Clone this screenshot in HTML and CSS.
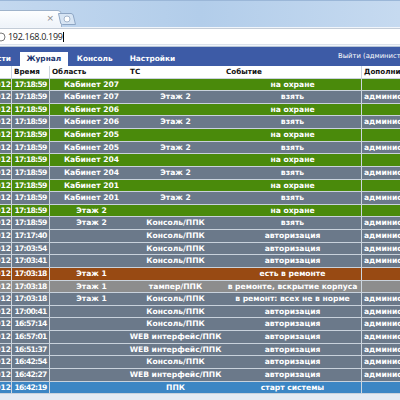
FILE: index.html
```html
<!DOCTYPE html>
<html>
<head>
  <title>Журнал</title>
  <meta charset="utf-8">
  <link rel="stylesheet" href="styles.css">
</head>
<body>
  <div class="tabstrip">
    <div class="tab"><span class="tab-close">&times;</span></div>
    <svg class="newtab" width="18" height="12" viewBox="0 0 18 12">
      <path d="M0.5 0.5 H13 Q14.5 0.5 15.2 2 L17.5 11.5 H4.5 Q3 11.5 2.6 10 Z" fill="#d7e5f4" stroke="#8ea6c4"/>
      <circle cx="9" cy="6" r="3" fill="#fff" stroke="#a4b6cc"/>
    </svg>
  </div>
  <div class="toolbar">
    <div class="omnibox">
      <svg class="globe" width="8" height="10" viewBox="0 0 8 10">
        <circle cx="1" cy="5" r="4" fill="none" stroke="#777" stroke-width="1"/>
      </svg>
      <span class="url">192.168.0.199</span><span class="caret"></span>
    </div>
  </div>
  <div class="nav">
    <span class="nav-item cut">сти</span>
    <span class="nav-item active">Журнал</span>
    <span class="nav-item">Консоль</span>
    <span class="nav-item">Настройки</span>
    <span class="logout">Выйти (администратор)</span>
  </div>
  <div class="log" id="log">
    <div class="row head">
      <div class="c date"></div>
      <div class="c">Время</div>
      <div class="c">Область</div>
      <div class="c">ТС</div>
      <div class="c">Событие</div>
      <div class="c">Дополнительно</div>
    </div>
  </div>
  <script>
    const rows = [
      ['ok', '17:18:59', 'Кабинет 207', '', 'на охране', ''],
      ['gray', '17:18:59', 'Кабинет 207', 'Этаж 2', 'взять', 'администратор'],
      ['ok', '17:18:59', 'Кабинет 206', '', 'на охране', ''],
      ['gray', '17:18:59', 'Кабинет 206', 'Этаж 2', 'взять', 'администратор'],
      ['ok', '17:18:59', 'Кабинет 205', '', 'на охране', ''],
      ['gray', '17:18:59', 'Кабинет 205', 'Этаж 2', 'взять', 'администратор'],
      ['ok', '17:18:59', 'Кабинет 204', '', 'на охране', ''],
      ['gray', '17:18:59', 'Кабинет 204', 'Этаж 2', 'взять', 'администратор'],
      ['ok', '17:18:59', 'Кабинет 201', '', 'на охране', ''],
      ['gray', '17:18:59', 'Кабинет 201', 'Этаж 2', 'взять', 'администратор'],
      ['ok', '17:18:59', 'Этаж 2', '', 'на охране', ''],
      ['gray', '17:18:59', 'Этаж 2', 'Консоль/ППК', 'взять', 'администратор'],
      ['gray', '17:17:40', '', 'Консоль/ППК', 'авторизация', 'администратор'],
      ['gray', '17:03:54', '', 'Консоль/ППК', 'авторизация', 'администратор'],
      ['gray', '17:03:41', '', 'Консоль/ППК', 'авторизация', 'администратор'],
      ['repair', '17:03:18', 'Этаж 1', '', 'есть в ремонте', ''],
      ['tamper', '17:03:18', 'Этаж 1', 'тампер/ППК', 'в ремонте, вскрытие корпуса', ''],
      ['gray', '17:03:18', 'Этаж 1', 'Консоль/ППК', 'в ремонт: всех не в норме', 'администратор'],
      ['gray', '17:00:41', '', 'Консоль/ППК', 'авторизация', 'администратор'],
      ['gray', '16:57:14', '', 'Консоль/ППК', 'авторизация', 'администратор'],
      ['gray', '16:57:01', '', 'WEB интерфейс/ППК', 'авторизация', 'администратор'],
      ['gray', '16:51:37', '', 'WEB интерфейс/ППК', 'авторизация', 'администратор'],
      ['gray', '16:42:54', '', 'Консоль/ППК', 'авторизация', 'администратор'],
      ['gray', '16:42:27', '', 'WEB интерфейс/ППК', 'авторизация', 'администратор'],
      ['start', '16:42:19', '', 'ППК', 'старт системы', '']
    ];

    const log = document.getElementById('log');
    rows.forEach(function(r) {
      const row = document.createElement('div');
      row.className = 'row ' + r[0];
      const cells = ['12.2012'].concat(r.slice(1));
      cells.forEach(function(text, i) {
        const cell = document.createElement('div');
        cell.className = 'c' + (i == 0 ? ' date' : '') + (i == 1 ? ' time' : '') + (i == 2 ? ' area' : '') + (i == 5 ? ' extra' : '');
        cell.textContent = text;
        row.appendChild(cell);
      });
      log.appendChild(row);
    });
  </script>
</body>
</html>
```

FILE: styles.css
```css
body {
  margin: 0;
  width: 400px;
  height: 400px;
  overflow: hidden;
  background-color: #e4ebf3;
  font-family: 'DejaVu Sans', Verdana, sans-serif;
}

.tabstrip {
  height: 27px;
  background: linear-gradient(to right, #c3d8ef, #b2cdea 50%, #c6daf0);
  display: flex;
  align-items: flex-end;
  box-sizing: border-box;
  border-top: 1px solid #9bb7d8;
}

.tab {
  width: 68px;
  height: 17px;
  margin-left: -6px;
  background: linear-gradient(to bottom, #fdfeff, #eef3f9);
  border: 1px solid #9fb3cb;
  border-bottom: none;
  border-radius: 0 5px 0 0;
  box-sizing: border-box;
  display: flex;
  justify-content: flex-end;
  align-items: center;
}

.tab-close {
  font-family: 'DejaVu Sans', sans-serif;
  font-size: 9px;
  color: #888;
  margin-right: 7px;
  margin-top: -2px;
}

.newtab {
  align-self: flex-start;
  margin-top: 12px;
  margin-left: -4px;
}

.toolbar {
  height: 20px;
  background-color: #f1f5fa;
  border-bottom: 1px solid #b8c6d6;
  box-sizing: border-box;
  padding-top: 1px;
}

.omnibox {
  height: 17px;
  background-color: #fff;
  border-top: 1px solid #c3ccd7;
  border-bottom: 1px solid #dbe2ea;
  box-sizing: border-box;
  display: flex;
  align-items: center;
}

.url {
  font-family: 'Open Sans', 'Liberation Sans', sans-serif;
  font-size: 9px;
  color: #222;
  letter-spacing: -0.3px;
}

.caret {
  width: 1px;
  height: 10px;
  background-color: #000;
}

.nav {
  height: 19px;
  background-color: #3d5ba6;
  display: flex;
  align-items: flex-end;
  position: relative;
  font-size: 7.4px;
  color: #fff;
}

.nav-item {
  font-weight: bold;
  height: 14px;
  line-height: 14px;
  padding: 0 8px;
  margin-right: 1px;
}

.nav-item.cut {
  margin-left: -11px;
  padding-right: 8px;
}

.nav-item.active {
  background-color: #fff;
  color: #1d3570;
  width: 48px;
  padding: 0;
  text-align: center;
  margin-right: 1px;
  box-sizing: border-box;
}

.logout {
  position: absolute;
  left: 338px;
  top: 5px;
  white-space: nowrap;
  font-size: 6.8px;
}

.log {
  font-size: 7.6px;
  font-weight: bold;
  color: #fff;
}

.row {
  display: grid;
  grid-template-columns: 12px 38px 78px 96px 138px 80px;
  height: 12.64px;
  box-sizing: border-box;
  border-bottom: 1px solid #c9d2dc;
  line-height: 11.6px;
  white-space: nowrap;
}

.row.head {
  height: 12.5px;
  background-color: #fff;
  color: #111;
  font-size: 7.2px;
}

.row.head .c {
  text-align: left;
  padding-left: 2px;
}

.row.head .c:first-child {
  padding-left: 0;
}

.c {
  overflow: hidden;
  text-align: center;
  border-right: 1px solid #cdd6df;
  box-sizing: border-box;
}

.c.area {
  padding-left: 6px;
}

.c:nth-child(3),
.c:nth-child(4) {
  border-right-color: transparent;
}

.head .c:nth-child(3),
.head .c:nth-child(4) {
  border-right-color: #fff;
}

.c.date {
  text-align: right;
  direction: rtl;
}

.c.time {
  letter-spacing: -0.7px;
}

.c.extra {
  text-align: left;
  padding-left: 2px;
  border-right: none;
}

.ok {
  background-color: #4a8a0b;
}

.gray {
  background-color: #6b798a;
}

.repair {
  background-color: #984a13;
}

.tamper {
  background-color: #8d8d8d;
}

.start {
  background-color: #3c86c4;
}
```
